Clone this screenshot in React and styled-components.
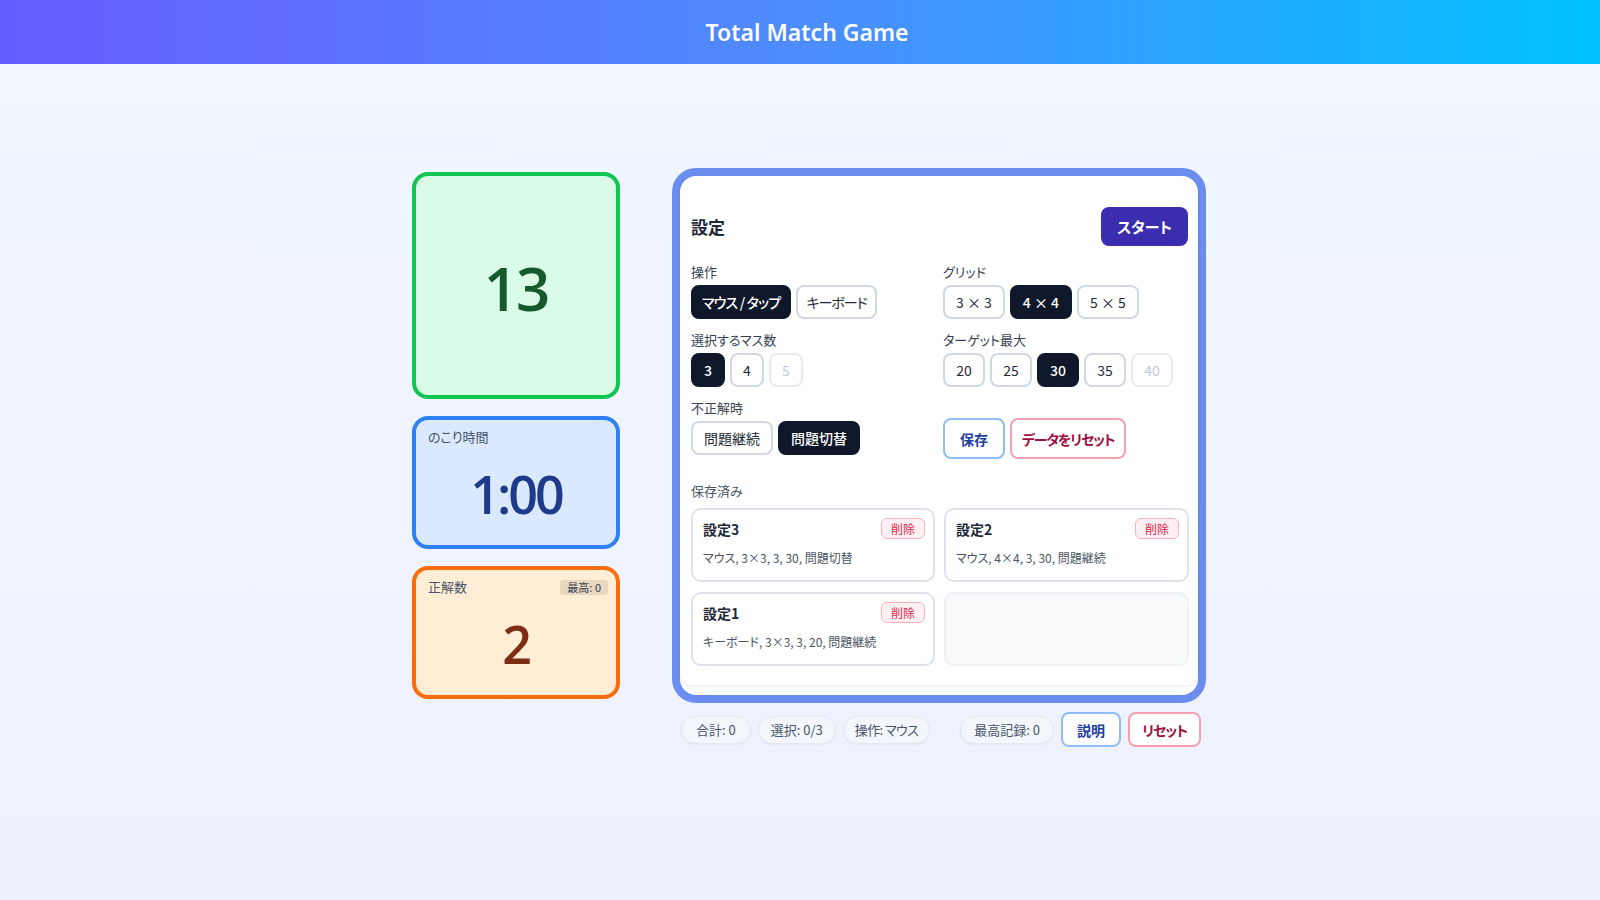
import React from "react";
import styled, { createGlobalStyle, css } from "styled-components";

const Global = createGlobalStyle`
  html, body { margin: 0; padding: 0; }
  body {
    font-family: "Noto Sans CJK JP", "Noto Sans", sans-serif;
    font-feature-settings: "palt";
    background: linear-gradient(180deg, #f0f7ff 0%, #eef1fd 100%);
    min-height: 900px;
    color: #1f2937;
  }
  * { box-sizing: border-box; }
`;

const Page = styled.div`
  min-height: 900px;
  display: flex;
  flex-direction: column;
`;

const Header = styled.header`
  height: 64px;
  display: flex;
  align-items: center;
  justify-content: center;
  padding-left: 14px;
  background: linear-gradient(90deg, #675cff 0%, #4d8cff 50%, #00c0ff 100%);
`;

const Title = styled.h1`
  margin: 0;
  font-family: "Noto Sans", sans-serif;
  font-size: 23px;
  font-weight: 600;
  color: #ffffff;
`;

const Main = styled.main`
  display: flex;
  justify-content: center;
  padding: 104px 0 0 18px;
`;

const Layout = styled.div`
  display: grid;
  grid-template-columns: 208px 534px;
  column-gap: 52px;
  row-gap: 9px;
  align-items: center;
`;

const LeftCol = styled.div`
  display: flex;
  flex-direction: column;
  gap: 17px;
`;

const tones = {
  green: { bg: "#dafbe6", border: "#10c552", text: "#145a2e" },
  blue: { bg: "#dbe9fe", border: "#2f80f4", text: "#1e3a8a" },
  orange: { bg: "#ffedd5", border: "#f96c0c", text: "#7c2d12" },
};

const StatCard = styled.div`
  position: relative;
  height: ${(p) => p.$h}px;
  border: 4px solid ${(p) => tones[p.$tone].border};
  background: ${(p) => tones[p.$tone].bg};
  border-radius: 16px;
  display: flex;
  flex-direction: column;
  padding: 8px 8px 4px 12px;
`;

const StatHead = styled.div`
  display: flex;
  justify-content: space-between;
  align-items: center;
  height: 18px;
`;

const StatLabel = styled.span`
  font-size: 13px;
  color: #475569;
  line-height: 18px;
`;

const Badge = styled.span`
  font-size: 11px;
  line-height: 15px;
  height: 15px;
  padding: 0 7px;
  border-radius: 4px;
  background: rgba(80, 60, 30, 0.12);
  color: #334155;
`;

const StatValue = styled.div`
  flex: 1;
  display: flex;
  align-items: center;
  justify-content: center;
  font-family: "Open Sans", "Noto Sans", sans-serif;
  font-weight: 600;
  font-size: ${(p) => p.$size}px;
  color: ${(p) => tones[p.$tone].text};
  letter-spacing: ${(p) => p.$ls || -2}px;
  margin-left: -4px;
`;

const Panel = styled.section`
  height: 535px;
  border: 8px solid #6b8def;
  border-radius: 24px;
  background: #ffffff;
  padding-bottom: 10px;
  display: flex;
  flex-direction: column;
`;

const PanelInner = styled.div`
  flex: 1;
  border-radius: 16px 16px 12px 12px;
  box-shadow: 0 1px 3px rgba(15, 23, 42, 0.1);
  padding: 31px 10px 0 11px;
`;

const HeadRow = styled.div`
  display: flex;
  justify-content: space-between;
  align-items: center;
  height: 39px;
  margin-bottom: 17px;
`;

const H2 = styled.h2`
  margin: 0;
  font-size: 17px;
  font-weight: 700;
  color: #1f2937;
`;

const StartButton = styled.button`
  width: 87px;
  height: 39px;
  border: none;
  border-radius: 8px;
  background: #3a2db0;
  color: #ffffff;
  font-family: inherit;
  font-feature-settings: "palt";
  font-size: 15px;
  font-weight: 700;
`;

const SettingsGrid = styled.div`
  display: grid;
  grid-template-columns: 244px 244px;
  column-gap: 8px;
  row-gap: 12px;
`;

const Field = styled.div`
  display: flex;
  flex-direction: column;
  gap: 4px;
`;

const FieldLabel = styled.div`
  font-size: 13px;
  line-height: 18px;
  height: ${(p) => (p.$h != null ? p.$h : 18)}px;
  color: #374151;
`;

const Options = styled.div`
  display: flex;
  gap: 5px;
`;

const Option = styled.button`
  height: 34px;
  padding: 0 ${(p) => (p.$pad != null ? p.$pad : 11)}px;
  min-width: ${(p) => p.$min || 0}px;
  border: 2px solid #d0d8e4;
  border-radius: 8px;
  background: #ffffff;
  color: #1f2937;
  font-family: inherit;
  font-feature-settings: "palt";
  font-size: 14px;
  letter-spacing: ${(p) => p.$ls || 0}px;
  white-space: pre;
  ${(p) =>
    p.$active &&
    css`
      background: #0f172a;
      border-color: #0f172a;
      color: #ffffff;
      font-weight: 500;
    `}
  ${(p) =>
    p.$disabled &&
    css`
      color: #c3c9d2;
      border-color: #e8ebf0;
    `}
`;

const outlineTones = {
  blue: { border: "#90bff7", text: "#1e3f9e" },
  rose: { border: "#f3a0b0", text: "#9d1040" },
};

const OutlineButton = styled.button`
  height: ${(p) => p.$h || 41}px;
  padding: 0 ${(p) => p.$pad || 14}px;
  border: 2px solid ${(p) => outlineTones[p.$tone].border};
  border-radius: 8px;
  background: #ffffff;
  color: ${(p) => outlineTones[p.$tone].text};
  font-family: inherit;
  font-feature-settings: "palt";
  font-size: 14px;
  font-weight: 600;
  letter-spacing: ${(p) => p.$ls || 0}px;
  white-space: nowrap;
`;

const SavedSection = styled.div`
  margin-top: 23px;
`;

const SavedLabel = styled.div`
  font-size: 13px;
  line-height: 18px;
  color: #4b5563;
  margin-bottom: 8px;
`;

const SavedGrid = styled.div`
  display: grid;
  grid-template-columns: 244px 245px;
  column-gap: 9px;
  row-gap: 10px;
`;

const SavedCard = styled.div`
  height: 74px;
  border: 2px solid #dde2ea;
  border-radius: 10px;
  padding: 8px 8px 12px 10px;
  background: #ffffff;
  ${(p) =>
    p.$empty &&
    css`
      background: #f8fafc;
      border-color: #eef1f5;
    `}
`;

const SavedTop = styled.div`
  display: flex;
  justify-content: space-between;
  align-items: center;
  height: 21px;
  margin-bottom: 10px;
`;

const SavedName = styled.span`
  font-size: 14px;
  font-weight: 700;
  color: #1f2937;
`;

const DeleteBadge = styled.span`
  height: 21px;
  line-height: 19px;
  padding: 0 9px;
  border: 1px solid #fbb1bf;
  border-radius: 6px;
  background: #fff1f3;
  color: #e11d48;
  font-size: 12px;
`;

const SavedDesc = styled.div`
  font-size: 12px;
  line-height: 18px;
  color: #4b5563;
`;

const Bar = styled.div`
  grid-column: 2;
  display: flex;
  justify-content: space-between;
  align-items: center;
  padding: 0 5px 0 9px;
`;

const Group = styled.div`
  display: flex;
  align-items: center;
  gap: 7px;
`;

const Pill = styled.span`
  height: 28px;
  line-height: 26px;
  padding: 0 ${(p) => p.$pad || 13}px;
  border: 1px solid #e3e8ef;
  border-radius: 999px;
  background: #f3f6fb;
  box-shadow: 0 1px 2px rgba(15, 23, 42, 0.05);
  font-size: 13px;
  color: #475569;
  letter-spacing: ${(p) => p.$ls || 0}px;
  white-space: pre;
`;

const saved = [
  { name: "設定3", desc: "マウス, 3×3, 3, 30, 問題切替" },
  { name: "設定2", desc: "マウス, 4×4, 3, 30, 問題継続" },
  { name: "設定1", desc: "キーボード, 3×3, 3, 20, 問題継続" },
];

export default function App() {
  return (
    <Page>
      <Global />
      <Header>
        <Title>Total Match Game</Title>
      </Header>
      <Main>
        <Layout>
          <LeftCol>
            <StatCard $tone="green" $h={227}>
              <StatValue $tone="green" $size={60}>13</StatValue>
            </StatCard>
            <StatCard $tone="blue" $h={133}>
              <StatHead>
                <StatLabel>のこり時間</StatLabel>
              </StatHead>
              <StatValue $tone="blue" $size={52} $ls={-3}>1:00</StatValue>
            </StatCard>
            <StatCard $tone="orange" $h={133}>
              <StatHead>
                <StatLabel>正解数</StatLabel>
                <Badge>最高: 0</Badge>
              </StatHead>
              <StatValue $tone="orange" $size={52}>2</StatValue>
            </StatCard>
          </LeftCol>

          <Panel>
            <PanelInner>
              <HeadRow>
                <H2>設定</H2>
                <StartButton>スタート</StartButton>
              </HeadRow>
              <SettingsGrid>
                <Field>
                  <FieldLabel>操作</FieldLabel>
                  <Options>
                    <Option $active $pad={9} $ls={-0.8}>マウス / タップ</Option>
                    <Option $pad={8} $ls={-1}>キーボード</Option>
                  </Options>
                </Field>
                <Field>
                  <FieldLabel>グリッド</FieldLabel>
                  <Options>
                    <Option $min={59}>3 × 3</Option>
                    <Option $active $min={59}>4 × 4</Option>
                    <Option $min={59}>5 × 5</Option>
                  </Options>
                </Field>
                <Field>
                  <FieldLabel>選択するマス数</FieldLabel>
                  <Options>
                    <Option $active $min={34}>3</Option>
                    <Option $min={34}>4</Option>
                    <Option $disabled $min={34}>5</Option>
                  </Options>
                </Field>
                <Field>
                  <FieldLabel>ターゲット最大</FieldLabel>
                  <Options>
                    <Option $min={42}>20</Option>
                    <Option $min={42}>25</Option>
                    <Option $active $min={42}>30</Option>
                    <Option $min={42}>35</Option>
                    <Option $disabled $min={42}>40</Option>
                  </Options>
                </Field>
                <Field>
                  <FieldLabel>不正解時</FieldLabel>
                  <Options>
                    <Option>問題継続</Option>
                    <Option $active>問題切替</Option>
                  </Options>
                </Field>
                <Field>
                  <FieldLabel $h={15} />
                  <Options>
                    <OutlineButton $tone="blue" $pad={15}>保存</OutlineButton>
                    <OutlineButton $tone="rose" $pad={10} $ls={-1.2}>データをリセット</OutlineButton>
                  </Options>
                </Field>
              </SettingsGrid>
              <SavedSection>
                <SavedLabel>保存済み</SavedLabel>
                <SavedGrid>
                  {saved.map((s) => (
                    <SavedCard key={s.name}>
                      <SavedTop>
                        <SavedName>{s.name}</SavedName>
                        <DeleteBadge>削除</DeleteBadge>
                      </SavedTop>
                      <SavedDesc>{s.desc}</SavedDesc>
                    </SavedCard>
                  ))}
                  <SavedCard $empty />
                </SavedGrid>
              </SavedSection>
            </PanelInner>
          </Panel>

          <Bar>
            <Group>
              <Pill $pad={14}>合計: 0</Pill>
              <Pill $pad={12}>選択: 0/3</Pill>
              <Pill $pad={11} $ls={-0.6}>操作: マウス</Pill>
            </Group>
            <Group>
              <Pill $pad={13}>最高記録: 0</Pill>
              <OutlineButton $tone="blue" $h={35} $pad={14}>説明</OutlineButton>
              <OutlineButton $tone="rose" $h={35} $pad={12} $ls={-1}>リセット</OutlineButton>
            </Group>
          </Bar>
        </Layout>
      </Main>
    </Page>
  );
}
